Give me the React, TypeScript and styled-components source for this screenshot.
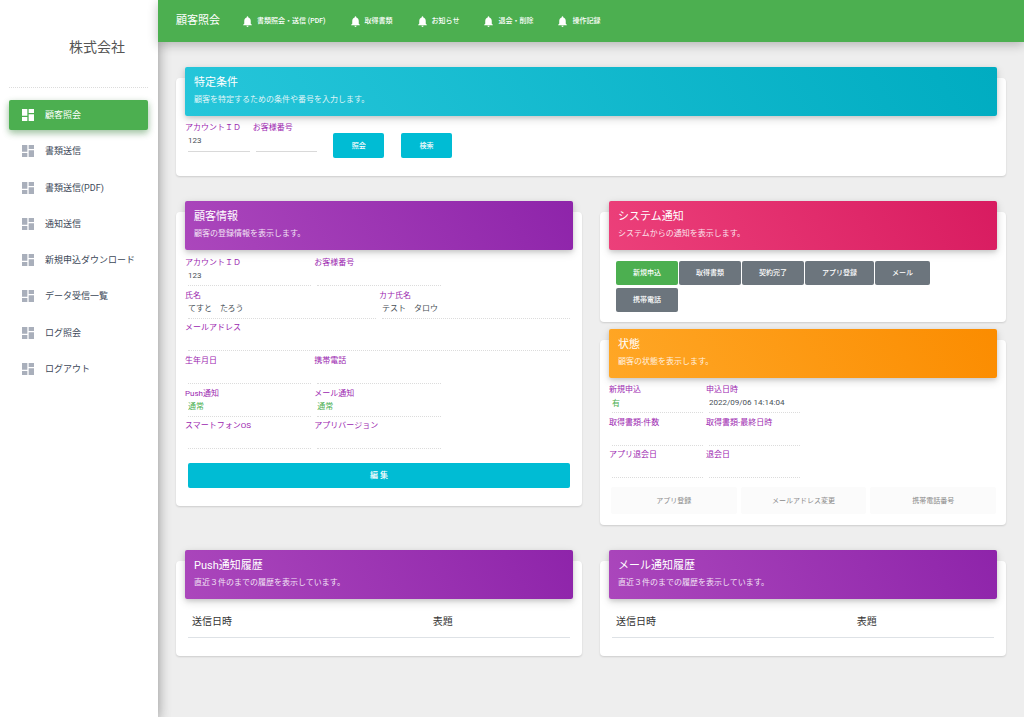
import React, { useId } from 'react';
import styled, { createGlobalStyle, css } from 'styled-components';
import { MdDashboard, MdNotifications } from 'react-icons/md';

type Tone = 'info' | 'primary' | 'rose' | 'warning';

const gradients: Record<Tone, string> = {
  info: 'linear-gradient(60deg, #26c6da, #00acc1)',
  primary: 'linear-gradient(60deg, #ab47bc, #8e24aa)',
  rose: 'linear-gradient(60deg, #ec407a, #d81b60)',
  warning: 'linear-gradient(60deg, #ffa726, #fb8c00)',
};

const GlobalStyle = createGlobalStyle`
  *, *::before, *::after { box-sizing: border-box; }
  body {
    margin: 0;
    background: #eeeeee;
    color: #3c4858;
    font-family: Roboto, "Noto Sans CJK JP", sans-serif;
    font-size: 8px;
    line-height: 12px;
  }
  button, input { font-family: inherit; }
`;

const Page = styled.div`
  display: flex;
  min-height: 100vh;
`;

const Sidebar = styled.aside`
  flex: 0 0 158px;
  padding: 0 10px 0 9px;
  background: #fff;
  box-shadow: 0 4px 12px rgba(0, 0, 0, 0.24), 0 6px 16px -5px rgba(0, 0, 0, 0.35);
`;

const Brand = styled.div`
  height: 88px;
  padding: 37px 23px 0 0;
  border-bottom: 1px dotted #dcdcdc;
  color: #555;
  font-size: 14px;
  font-weight: 400;
  line-height: 20px;
  text-align: right;
`;

const Menu = styled.ul`
  display: flex;
  flex-direction: column;
  justify-content: space-between;
  min-height: 284px;
  margin: 12px 0 0;
  padding: 0;
  list-style: none;
`;

const MenuLink = styled.a<{ $active?: boolean }>`
  display: flex;
  align-items: center;
  gap: 9px;
  height: 30px;
  padding: 0 11px;
  border-radius: 2px;
  color: #3c4858;
  font-size: 9px;
  font-weight: 400;
  text-decoration: none;
  white-space: nowrap;

  svg { flex: none; color: #a9afbb; }

  ${(p) => p.$active && css`
    background: #4caf50;
    color: #fff;
    box-shadow: 0 3px 8px rgba(0, 0, 0, 0.14), 0 3px 6px rgba(76, 175, 80, 0.4);
    svg { color: #fff; }
  `}
`;

const Main = styled.div`
  position: relative;
  flex: 1;
  min-width: 0;
`;

const TopBar = styled.header`
  position: relative;
  display: flex;
  align-items: center;
  min-height: 42px;
  padding: 0 18px;
  background: #4caf50;
  color: #fff;
  box-shadow: 0 3px 10px rgba(0, 0, 0, 0.24);
`;

const PageTitle = styled.h1`
  margin: 0 21px 0 0;
  font-size: 11px;
  font-weight: 400;
  line-height: 16px;
`;

const TopNav = styled.nav`
  display: flex;
  gap: 23px;
`;

const TopLink = styled.a`
  display: flex;
  align-items: center;
  gap: 3px;
  color: #fff;
  font-size: 7px;
  font-weight: 500;
  text-decoration: none;
  white-space: nowrap;
`;

const Content = styled.main`
  display: grid;
  gap: 36px;
  padding: 36px 18px;
`;

const Columns = styled.div`
  display: grid;
  grid-template-columns: repeat(2, minmax(0, 1fr));
  align-items: start;
  gap: 18px;
`;

const Stack = styled.div`
  display: grid;
  gap: 18px;
`;

const Panel = styled.section`
  padding: 0 9px;
  background: #fff;
  border-radius: 4px;
  box-shadow: 0 1px 2px rgba(0, 0, 0, 0.14);
`;

const PanelHeader = styled.header<{ $tone: Tone }>`
  height: 49px;
  margin-top: -11px;
  padding: 8px 9px;
  border-radius: 2px;
  background: ${(p) => gradients[p.$tone]};
  color: #fff;
  box-shadow: 0 3px 10px rgba(0, 0, 0, 0.14), 0 2px 4px rgba(0, 0, 0, 0.12);

  h2 {
    margin: 0;
    font-size: 11px;
    font-weight: 400;
    line-height: 16px;
  }
  p {
    margin: 2px 0 0;
    font-size: 8px;
    line-height: 14px;
    opacity: 0.85;
  }
`;

const SearchGrid = styled.form`
  display: grid;
  grid-template-columns: repeat(12, minmax(0, 1fr));
  padding: 6px 0 18px;
`;

const CustomerGrid = styled.div`
  display: grid;
  grid-template-columns: repeat(6, minmax(0, 1fr));
  grid-auto-rows: 1fr;
  min-height: 196px;
  margin-top: 7px;
`;

const StatusGrid = styled.div`
  display: grid;
  grid-template-columns: repeat(4, minmax(0, 1fr));
  grid-auto-rows: 1fr;
  min-height: 98px;
  margin-top: 6px;
`;

const FieldBox = styled.div<{ $column?: string }>`
  grid-column: ${(p) => p.$column ?? 'auto'};
  min-width: 0;

  label {
    display: block;
    color: #9c27b0;
    font-size: 8px;
    line-height: 12px;
    white-space: nowrap;
  }
`;

const FieldInput = styled.input<{ $good?: boolean }>`
  display: block;
  width: calc(100% - 6px);
  height: ${(p) => (p.readOnly ? 17 : 18)}px;
  margin: 0 3px;
  padding: 0 0 4px;
  border: 0;
  border-bottom: 1px ${(p) => (p.readOnly ? 'dotted #dcdcdc' : 'solid #d9d9d9')};
  background: transparent;
  color: ${(p) => (p.$good ? '#4caf50' : '#495057')};
  font-size: 8px;
  outline: none;
`;

const buttonBase = css`
  border: 0;
  border-radius: 2px;
  color: #fff;
  font-size: 7px;
  font-weight: 500;
  line-height: 12px;
  cursor: pointer;
`;

const ActionButton = styled.button`
  ${buttonBase}
  width: 51px;
  height: 25px;
  margin: 11px 0 0 13px;
  padding: 0;
  background: #00bcd4;
`;

const EditButton = styled(ActionButton)`
  display: block;
  width: calc(100% - 6px);
  margin: 10px 3px 18px;
  font-size: 8px;
`;

const TagList = styled.div`
  display: flex;
  flex-wrap: wrap;
  gap: 3px 1px;
  padding: 11px 7px 10px;
`;

const TagButton = styled.button<{ $on?: boolean }>`
  ${buttonBase}
  height: 24px;
  padding: 0 17px;
  background: ${(p) => (p.$on ? '#4caf50' : '#6c757d')};
`;

const ButtonRow = styled.div`
  display: grid;
  grid-template-columns: repeat(3, minmax(0, 1fr));
  gap: 4px;
  padding: 5px 1px 11px 2px;
`;

const PlainButton = styled.button`
  ${buttonBase}
  height: 27px;
  background: #fbfbfb;
  color: #8a8a8a;
  font-weight: 400;
  cursor: default;
`;

const HistoryTable = styled.table`
  width: calc(100% - 6px);
  margin: 12px 3px 0;
  border-collapse: collapse;
  table-layout: fixed;

  th {
    height: 26px;
    padding: 0 4px 3px;
    border-bottom: 1px solid #dee2e6;
    color: #333;
    font-size: 10px;
    font-weight: 400;
    text-align: left;
  }
  th:first-child { width: 63%; }
`;

const HistoryPanel = styled(Panel)`
  padding-bottom: 18px;
`;

const menuItems = [
  '顧客照会',
  '書類送信',
  '書類送信(PDF)',
  '通知送信',
  '新規申込ダウンロード',
  'データ受信一覧',
  'ログ照会',
  'ログアウト',
];

const topItems = ['書類照会・送信 (PDF)', '取得書類', 'お知らせ', '退会・削除', '操作記録'];

const noticeTags = ['新規申込', '取得書類', '契約完了', 'アプリ登録', 'メール', '携帯電話'];

interface FieldProps {
  label: string;
  value?: string;
  column?: string;
  good?: boolean;
  editable?: boolean;
}

const customerFields: FieldProps[] = [
  { label: 'アカウントＩＤ', value: '123', column: '1 / span 2' },
  { label: 'お客様番号', column: '3 / span 2' },
  { label: '氏名', value: 'てすと　たろう', column: '1 / span 3' },
  { label: 'カナ氏名', value: 'テスト　タロウ', column: '4 / span 3' },
  { label: 'メールアドレス', column: '1 / span 6' },
  { label: '生年月日', column: '1 / span 2' },
  { label: '携帯電話', column: '3 / span 2' },
  { label: 'Push通知', value: '通常', column: '1 / span 2', good: true },
  { label: 'メール通知', value: '通常', column: '3 / span 2', good: true },
  { label: 'スマートフォンOS', column: '1 / span 2' },
  { label: 'アプリバージョン', column: '3 / span 2' },
];

const statusFields: FieldProps[] = [
  { label: '新規申込', value: '有', column: '1', good: true },
  { label: '申込日時', value: '2022/09/06 14:14:04', column: '2' },
  { label: '取得書類-件数', column: '1' },
  { label: '取得書類-最終日時', column: '2' },
  { label: 'アプリ退会日', column: '1' },
  { label: '退会日', column: '2' },
];

function Field({ label, value = '', column, good, editable }: FieldProps) {
  const id = useId();
  return (
    <FieldBox $column={column}>
      <label htmlFor={id}>{label}</label>
      <FieldInput id={id} type="text" defaultValue={value} readOnly={!editable} $good={good} />
    </FieldBox>
  );
}

function Heading({ tone, title, text }: { tone: Tone; title: string; text: string }) {
  return (
    <PanelHeader $tone={tone}>
      <h2>{title}</h2>
      <p>{text}</p>
    </PanelHeader>
  );
}

function History({ title }: { title: string }) {
  return (
    <HistoryPanel>
      <Heading tone="primary" title={title} text="直近３件のまでの履歴を表示しています。" />
      <HistoryTable>
        <thead>
          <tr>
            <th scope="col">送信日時</th>
            <th scope="col">表題</th>
          </tr>
        </thead>
      </HistoryTable>
    </HistoryPanel>
  );
}

export default function App() {
  return (
    <>
      <GlobalStyle />
      <Page>
        <Sidebar>
          <Brand>株式会社</Brand>
          <nav>
            <Menu>
              {menuItems.map((item, i) => (
                <li key={item}>
                  <MenuLink href="#" $active={i === 0}>
                    <MdDashboard size={16} />
                    {item}
                  </MenuLink>
                </li>
              ))}
            </Menu>
          </nav>
        </Sidebar>
        <Main>
          <TopBar>
            <PageTitle>顧客照会</PageTitle>
            <TopNav>
              {topItems.map((item) => (
                <TopLink href="#" key={item}>
                  <MdNotifications size={13} />
                  {item}
                </TopLink>
              ))}
            </TopNav>
          </TopBar>
          <Content>
            <Panel>
              <Heading tone="info" title="特定条件" text="顧客を特定するための条件や番号を入力します。" />
              <SearchGrid onSubmit={(e) => e.preventDefault()}>
                <Field label="アカウントＩＤ" value="123" editable />
                <Field label="お客様番号" editable />
                <ActionButton type="submit">照会</ActionButton>
                <ActionButton type="button">検索</ActionButton>
              </SearchGrid>
            </Panel>
            <Columns>
              <Panel>
                <Heading tone="primary" title="顧客情報" text="顧客の登録情報を表示します。" />
                <CustomerGrid>
                  {customerFields.map((f) => (
                    <Field key={f.label} {...f} />
                  ))}
                </CustomerGrid>
                <EditButton type="button">編 集</EditButton>
              </Panel>
              <Stack>
                <Panel>
                  <Heading tone="rose" title="システム通知" text="システムからの通知を表示します。" />
                  <TagList>
                    {noticeTags.map((tag, i) => (
                      <TagButton type="button" key={tag} $on={i === 0}>{tag}</TagButton>
                    ))}
                  </TagList>
                </Panel>
                <Panel>
                  <Heading tone="warning" title="状態" text="顧客の状態を表示します。" />
                  <StatusGrid>
                    {statusFields.map((f) => (
                      <Field key={f.label} {...f} />
                    ))}
                  </StatusGrid>
                  <ButtonRow>
                    <PlainButton type="button" disabled>アプリ登録</PlainButton>
                    <PlainButton type="button" disabled>メールアドレス変更</PlainButton>
                    <PlainButton type="button" disabled>携帯電話番号</PlainButton>
                  </ButtonRow>
                </Panel>
              </Stack>
            </Columns>
            <Columns>
              <History title="Push通知履歴" />
              <History title="メール通知履歴" />
            </Columns>
          </Content>
        </Main>
      </Page>
    </>
  );
}
